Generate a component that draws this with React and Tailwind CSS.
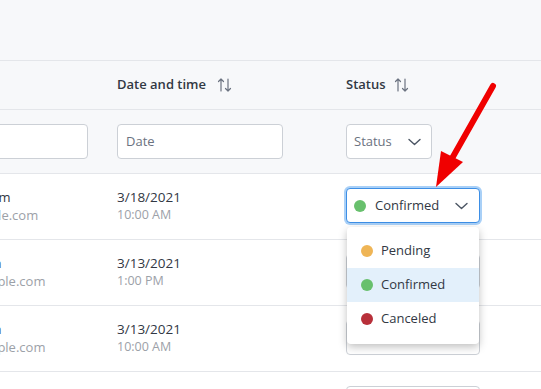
const rows = [
  { name: 'Kimberley Kim', email: 'kim@example.com', date: '3/18/2021', time: '10:00 AM', status: 'Confirmed', open: true },
  { name: 'Nathan Shan', email: 'shan@example.com', date: '3/13/2021', time: '1:00 PM', status: 'Confirmed' },
  { name: 'Nathan Shan', email: 'shan@example.com', date: '3/13/2021', time: '10:00 AM', status: 'Confirmed' },
  { name: 'Tom Lee', email: 'lee@example.com', date: '3/12/2021', time: '9:00 AM', status: 'Pending' },
]

const dots = {
  Pending: 'bg-[#efb556]',
  Confirmed: 'bg-[#68c06d]',
  Canceled: 'bg-[#b8303a]',
}

function SortIcon() {
  return (
    <svg width="16" height="16" viewBox="0 0 16 16" fill="none" stroke="#6b7280" strokeWidth="1.2" strokeLinecap="round" strokeLinejoin="round">
      <path d="M4 14V2M1.5 4.5L4 2l2.5 2.5" />
      <path d="M11 2v12M8.5 11.5L11 14l2.5-2.5" />
    </svg>
  )
}

function Chevron() {
  return (
    <svg width="13" height="8" viewBox="0 0 13 8" fill="none" stroke="#4b5563" strokeWidth="1.4" strokeLinecap="round" strokeLinejoin="round">
      <path d="M1 1.5l5.5 5 5.5-5" />
    </svg>
  )
}

function StatusSelect({ status, open }) {
  return (
    <div className={'relative w-[134px] ' + (open ? 'z-20' : '')}>
      <div
        className={
          'flex h-[35px] items-center rounded border bg-white pl-[7px] pr-[11px] ' +
          (open ? 'border-[#3d8fe6] ring-2 ring-[#a9d0f7]' : 'border-[#ccd0d6]')
        }
      >
        <span className={'h-3 w-3 rounded-full ' + dots[status]} />
        <span className="ml-[9px] flex-1 text-[13px]">{status}</span>
        <Chevron />
      </div>
      {open && (
        <div className="absolute left-[1px] top-[39px] z-30 w-[132px] rounded bg-white pb-[8px] pt-[7px] shadow-[0_3px_8px_rgba(0,0,0,0.25)]">
          {['Pending', 'Confirmed', 'Canceled'].map((s) => (
            <div
              key={s}
              className={'flex h-[34px] items-center pl-[14px] ' + (s === 'Confirmed' ? 'bg-[#e3f0fb]' : '')}
            >
              <span className={'h-3 w-3 rounded-full ' + dots[s]} />
              <span className="ml-[8px] text-[13px]">{s}</span>
            </div>
          ))}
        </div>
      )}
    </div>
  )
}

export default function App() {
  return (
    <div className="relative h-[389px] w-[541px] overflow-hidden bg-white font-['Open_Sans',sans-serif] text-[#323844]">
      <div className="h-[61px] border-b border-[#e4e6ea] bg-[#f7f8fa]" />
      <div className="-ml-[93px]">
        <div className="grid h-[49px] grid-cols-[194px_229px_1fr] items-center border-b border-[#e4e6ea] bg-[#f7f8fa]">
          <div className="pl-4 text-[13px] font-semibold">Name</div>
          <div className="flex items-center gap-[11px] pl-4 text-[13px] font-semibold">
            Date and time <SortIcon />
          </div>
          <div className="flex items-center gap-[8px] pl-4 text-[13px] font-semibold">
            Status <SortIcon />
          </div>
        </div>
        <div className="grid h-[64px] grid-cols-[194px_229px_1fr] items-center border-b border-[#e4e6ea] bg-[#f7f8fa]">
          <div className="pl-4">
            <div className="h-[35px] w-[165px] rounded border border-[#ccd0d6] bg-white" />
          </div>
          <div className="pl-4">
            <div className="flex h-[35px] w-[166px] items-center rounded border border-[#ccd0d6] bg-white px-[8px] text-[13px] text-[#6b7280]">
              Date
            </div>
          </div>
          <div className="pl-4">
            <div className="flex h-[35px] w-[86px] items-center justify-between rounded border border-[#ccd0d6] bg-white pl-[7px] pr-[10px] text-[13px] text-[#6b7280]">
              Status
              <Chevron />
            </div>
          </div>
        </div>
        {rows.map((r, i) => (
          <div key={i} className="grid h-[66px] grid-cols-[194px_229px_1fr] border-b border-[#e4e6ea] bg-white">
            <div className="pl-4 pt-[14px] text-[13px] leading-[18px]">
              <div>{r.name}</div>
              <div className="text-[#9ca1a8]">{r.email}</div>
            </div>
            <div className="pl-4 pt-[14px] leading-[18px]">
              <div className="text-[13.5px]">{r.date}</div>
              <div className="text-[12.5px] text-[#9ca1a8]">{r.time}</div>
            </div>
            <div className="pl-4 pt-[14px]">
              <StatusSelect status={r.status} open={r.open} />
            </div>
          </div>
        ))}
      </div>
      <svg className="pointer-events-none absolute left-0 top-0 z-40" width="541" height="389" viewBox="0 0 541 389">
        <line x1="493" y1="86" x2="450" y2="162" stroke="#f00000" strokeWidth="6" strokeLinecap="round" />
        <polygon points="436,187 441,151 463,162" fill="#f00000" />
      </svg>
    </div>
  )
}
